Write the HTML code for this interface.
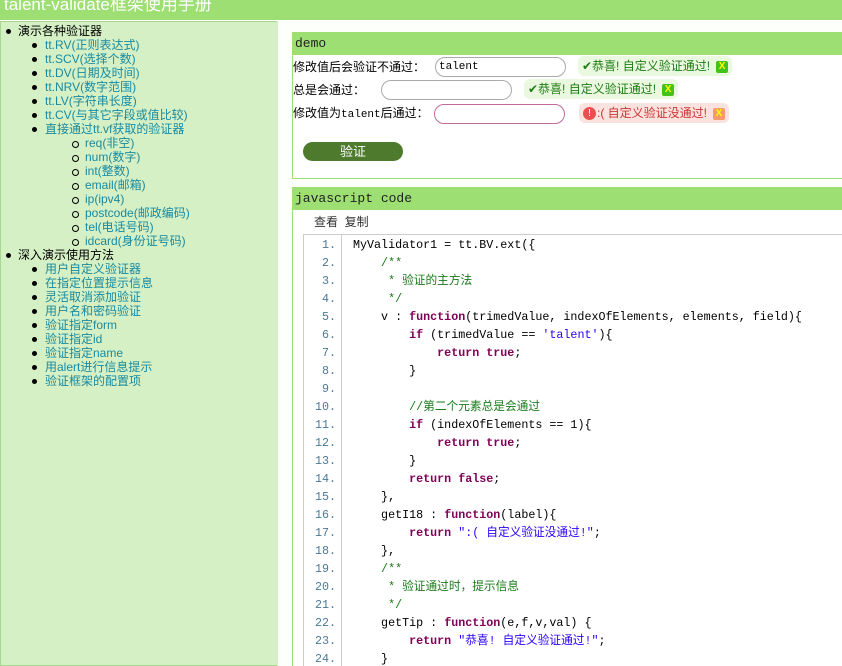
<!DOCTYPE html>
<html><head><meta charset="utf-8"><style>
*{margin:0;padding:0;box-sizing:border-box}
body{width:842px;height:666px;overflow:hidden;background:#fff;font-family:"Liberation Sans","Noto Sans CJK SC",sans-serif;font-size:12px;position:relative}
#hd{position:absolute;left:0;top:0;width:842px;height:20px;background:#9ddf73;color:#fff;font-size:17px;line-height:10px;padding-left:4px;overflow:hidden}
#sb{position:absolute;left:0;top:21px;width:277px;height:645px;background:#d4f0c4;border:1px solid #a8d890;border-right:none}
#sb ul{list-style:none}
#sb li{position:relative;height:14px;line-height:14px;white-space:nowrap}
.l1{padding-left:17px;color:#000}
.l1:before{content:"";position:absolute;left:5px;top:5px;width:5px;height:5px;border-radius:50%;background:#000}
.l2{padding-left:44px;color:#1a8aa0}
.l2:before{content:"";position:absolute;left:31px;top:5px;width:5px;height:5px;border-radius:50%;background:#000}
.l3{padding-left:84px;color:#1a8aa0}
.l3:before{content:"";position:absolute;left:71px;top:5px;width:5px;height:5px;border-radius:50%;border:1px solid #000}
#rc{position:absolute;left:277px;top:21px;width:565px;height:645px;background:#fdfffb;border-left:1px solid #d8eccd;overflow:hidden}
.box{position:absolute;left:14px;width:560px;border:1px solid #9ddf73;background:#fff}
.bh{height:22px;background:#9ddf73;font-family:"Liberation Mono","Noto Sans CJK SC",monospace;font-size:13px;line-height:22px;padding-left:2px;color:#222}
.row{position:absolute;left:0;font-size:12px;color:#000;white-space:nowrap;line-height:14px;height:14px}
.inp{position:absolute;height:20px;border:1px solid #aaa;border-radius:10px;background:#fff;font-family:"Liberation Mono",monospace;font-size:11px;padding-left:3px;line-height:18px}
.tip{position:absolute;height:20px;line-height:20px;border-radius:6px;padding:0 4px;white-space:nowrap}
.ok{background:#eaf8e0;color:#1d7c12}
.err{background:#fae3de;color:#c33}
.x{display:inline-block;width:12px;height:12px;line-height:12px;text-align:center;font-size:10px;font-weight:bold;border-radius:2px;margin-left:6px;vertical-align:middle}
.ok .x{background:#44c21a;color:#ff0}
.err .x{background:#f59a6c;color:#ff0}
#btn{position:absolute;left:10px;top:109px;width:100px;height:19px;border-radius:10px;background:#4d7a2c;color:#fff;text-align:center;line-height:19px;font-size:13px}
#code{position:absolute;left:10px;top:46px;width:560px;height:460px;border:1px solid #ccc;border-right:none;font-family:"Liberation Mono","Noto Sans CJK SC",monospace;font-size:11.7px}
#gut{position:absolute;left:0;top:0;width:38px;height:100%;border-right:1px solid #ccc;background:#fff}
.ln{position:absolute;right:6px;color:#4a7a99;text-align:right;line-height:14px;height:14px}
.cl{position:absolute;left:49px;white-space:pre;color:#000;line-height:14px;height:14px}
.k{color:#7f0055;font-weight:bold}
.c{color:#1a7a1a}
.s{color:#2a00ff}
</style></head><body>
<div id="hd">talent-validate框架使用手册</div>
<div id="sb"><ul style="margin-top:2px">
<li class="l1">演示各种验证器</li>
<li class="l2">tt.RV(正则表达式)</li>
<li class="l2">tt.SCV(选择个数)</li>
<li class="l2">tt.DV(日期及时间)</li>
<li class="l2">tt.NRV(数字范围)</li>
<li class="l2">tt.LV(字符串长度)</li>
<li class="l2">tt.CV(与其它字段或值比较)</li>
<li class="l2">直接通过tt.vf获取的验证器</li>
<li class="l3">req(非空)</li>
<li class="l3">num(数字)</li>
<li class="l3">int(整数)</li>
<li class="l3">email(邮箱)</li>
<li class="l3">ip(ipv4)</li>
<li class="l3">postcode(邮政编码)</li>
<li class="l3">tel(电话号码)</li>
<li class="l3">idcard(身份证号码)</li>
<li class="l1">深入演示使用方法</li>
<li class="l2">用户自定义验证器</li>
<li class="l2">在指定位置提示信息</li>
<li class="l2">灵活取消添加验证</li>
<li class="l2">用户名和密码验证</li>
<li class="l2">验证指定form</li>
<li class="l2">验证指定id</li>
<li class="l2">验证指定name</li>
<li class="l2">用alert进行信息提示</li>
<li class="l2">验证框架的配置项</li>
</ul></div>
<div id="rc">
<div class="box" style="top:11px;height:147px">
<div class="bh">demo</div>
<div class="row" style="top:27px">修改值后会验证不通过：</div>
<div class="inp" style="left:142px;top:24px;width:131px">talent</div>
<div class="tip ok" style="left:285px;top:23px">✔恭喜! 自定义验证通过!<span class="x">X</span></div>
<div class="row" style="top:50px">总是会通过：</div>
<div class="inp" style="left:88px;top:47px;width:131px"></div>
<div class="tip ok" style="left:231px;top:46px">✔恭喜! 自定义验证通过!<span class="x">X</span></div>
<div class="row" style="top:73px">修改值为<span style="font-family:'Liberation Mono',monospace;font-size:11px">talent</span>后通过：</div>
<div class="inp" style="left:141px;top:71px;width:131px;border-color:#c46a9a"></div>
<div class="tip err" style="left:286px;top:70px"><span style="display:inline-block;width:13px;height:13px;border-radius:50%;background:#e85050;color:#fff;font-size:10px;line-height:13px;text-align:center;vertical-align:middle;margin-right:1px">!</span>:( 自定义验证没通过!<span class="x">X</span></div>
<div id="btn">验证</div>
</div>
<div class="box" style="top:166px;height:500px">
<div class="bh">javascript code</div>
<div class="row" style="left:21px;top:27px;color:#333">查看&nbsp;&nbsp;复制</div>
<div id="code">
<div id="gut"></div>
<div style="position:absolute;left:0;top:0;width:38px">
<div class="ln" style="top:3px">1.</div><div class="ln" style="top:21px">2.</div><div class="ln" style="top:39px">3.</div><div class="ln" style="top:57px">4.</div><div class="ln" style="top:75px">5.</div><div class="ln" style="top:93px">6.</div><div class="ln" style="top:111px">7.</div><div class="ln" style="top:129px">8.</div><div class="ln" style="top:147px">9.</div><div class="ln" style="top:165px">10.</div><div class="ln" style="top:183px">11.</div><div class="ln" style="top:201px">12.</div><div class="ln" style="top:219px">13.</div><div class="ln" style="top:237px">14.</div><div class="ln" style="top:255px">15.</div><div class="ln" style="top:273px">16.</div><div class="ln" style="top:291px">17.</div><div class="ln" style="top:309px">18.</div><div class="ln" style="top:327px">19.</div><div class="ln" style="top:345px">20.</div><div class="ln" style="top:363px">21.</div><div class="ln" style="top:381px">22.</div><div class="ln" style="top:399px">23.</div><div class="ln" style="top:417px">24.</div>
</div>
<div class="cl" style="top:3px">MyValidator1 = tt.BV.ext({</div>
<div class="cl c" style="top:21px">    /**</div>
<div class="cl c" style="top:39px">     * 验证的主方法</div>
<div class="cl c" style="top:57px">     */</div>
<div class="cl" style="top:75px">    v : <span class="k">function</span>(trimedValue, indexOfElements, elements, field){</div>
<div class="cl" style="top:93px">        <span class="k">if</span> (trimedValue == <span class="s">'talent'</span>){</div>
<div class="cl" style="top:111px">            <span class="k">return true</span>;</div>
<div class="cl" style="top:129px">        }</div>
<div class="cl c" style="top:165px">        //第二个元素总是会通过</div>
<div class="cl" style="top:183px">        <span class="k">if</span> (indexOfElements == 1){</div>
<div class="cl" style="top:201px">            <span class="k">return true</span>;</div>
<div class="cl" style="top:219px">        }</div>
<div class="cl" style="top:237px">        <span class="k">return false</span>;</div>
<div class="cl" style="top:255px">    },</div>
<div class="cl" style="top:273px">    getI18 : <span class="k">function</span>(label){</div>
<div class="cl" style="top:291px">        <span class="k">return</span> <span class="s">":( 自定义验证没通过!"</span>;</div>
<div class="cl" style="top:309px">    },</div>
<div class="cl c" style="top:327px">    /**</div>
<div class="cl c" style="top:345px">     * 验证通过时，提示信息</div>
<div class="cl c" style="top:363px">     */</div>
<div class="cl" style="top:381px">    getTip : <span class="k">function</span>(e,f,v,val) {</div>
<div class="cl" style="top:399px">        <span class="k">return</span> <span class="s">"恭喜! 自定义验证通过!"</span>;</div>
<div class="cl" style="top:417px">    }</div>
</div>
</div>
</div>
</body></html>
